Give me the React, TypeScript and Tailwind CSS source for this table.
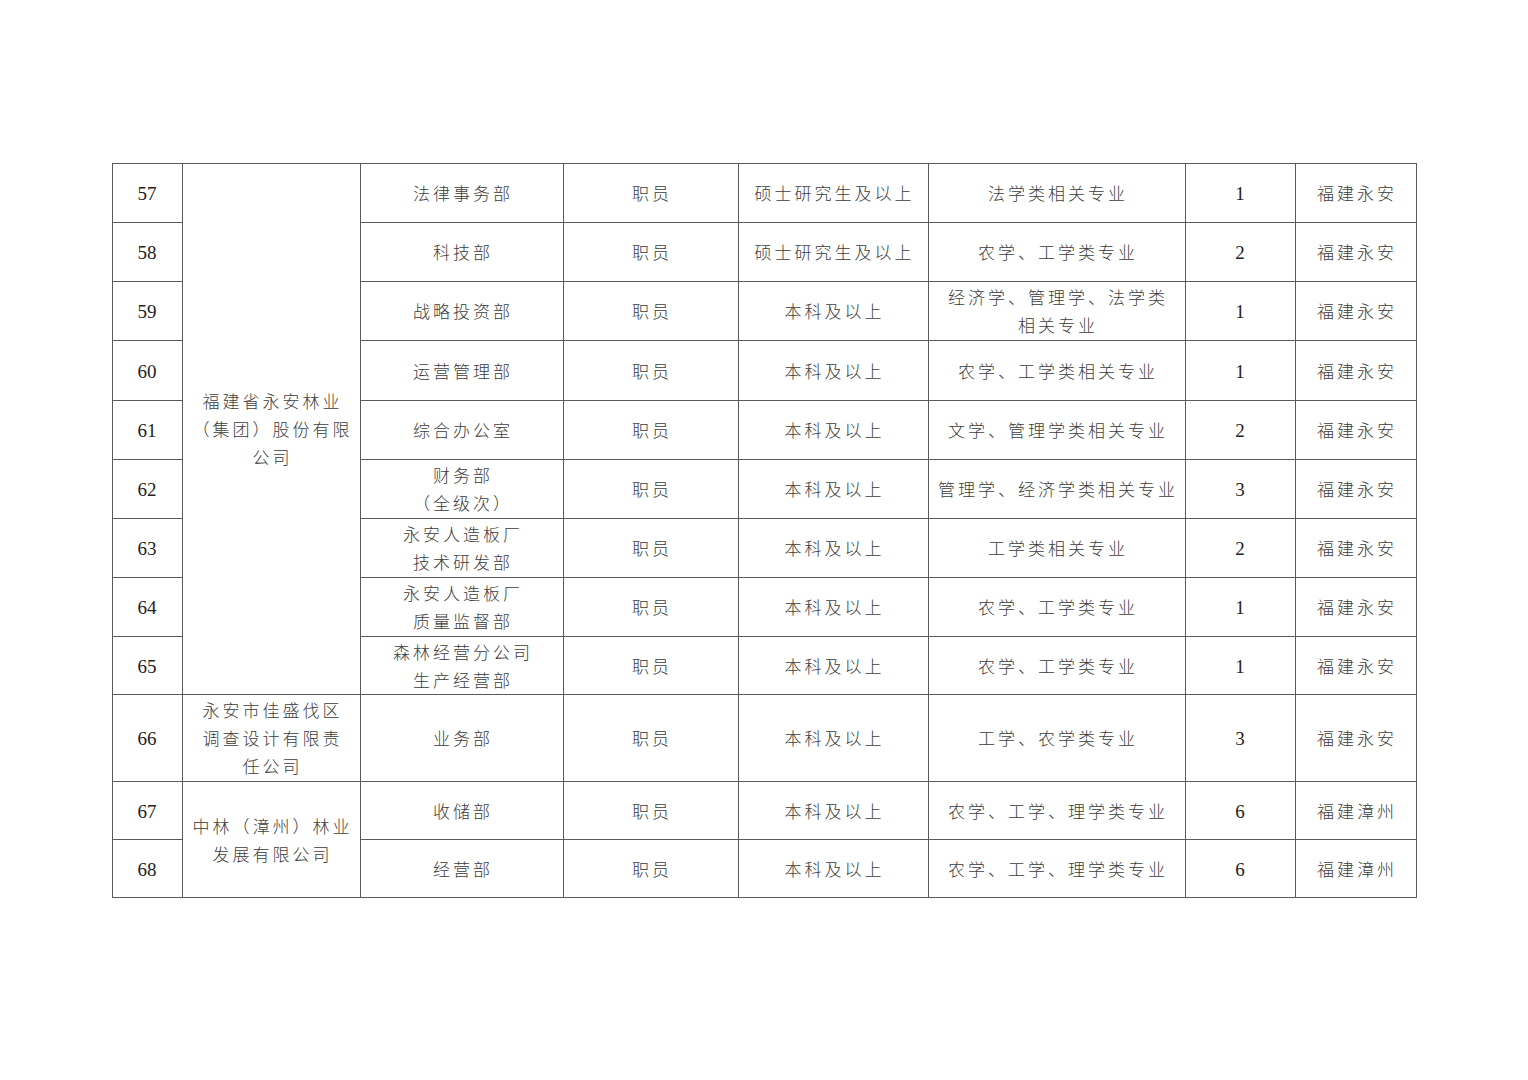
import React from "react";

type Row = {
  no: string;
  dept: string[];
  pos: string;
  edu: string;
  major: string[];
  num: string;
  place: string;
  h: string;
};

const cn = "[font-family:'Noto_Sans_CJK_SC',sans-serif] font-light text-[17px] tracking-[3px] leading-[28px] text-[#3c3c3c]";
const numCls = "inline-block pt-[3px] [font-family:'Liberation_Serif',serif] text-[19px] text-[#222]";
const td = "border border-[#5a5a5a] text-center align-middle p-0";

function Txt({ lines }: { lines: string[] }) {
  return (
    <div className={cn + " whitespace-nowrap mr-[-3px]"}>
      {lines.map((l, i) => (
        <div key={i}>{l}</div>
      ))}
    </div>
  );
}

const rows: Row[] = [
  { no: "57", dept: ["法律事务部"], pos: "职员", edu: "硕士研究生及以上", major: ["法学类相关专业"], num: "1", place: "福建永安", h: "h-[59px]" },
  { no: "58", dept: ["科技部"], pos: "职员", edu: "硕士研究生及以上", major: ["农学、工学类专业"], num: "2", place: "福建永安", h: "h-[59px]" },
  { no: "59", dept: ["战略投资部"], pos: "职员", edu: "本科及以上", major: ["经济学、管理学、法学类", "相关专业"], num: "1", place: "福建永安", h: "h-[59px]" },
  { no: "60", dept: ["运营管理部"], pos: "职员", edu: "本科及以上", major: ["农学、工学类相关专业"], num: "1", place: "福建永安", h: "h-[60px]" },
  { no: "61", dept: ["综合办公室"], pos: "职员", edu: "本科及以上", major: ["文学、管理学类相关专业"], num: "2", place: "福建永安", h: "h-[59px]" },
  { no: "62", dept: ["财务部", "（全级次）"], pos: "职员", edu: "本科及以上", major: ["管理学、经济学类相关专业"], num: "3", place: "福建永安", h: "h-[59px]" },
  { no: "63", dept: ["永安人造板厂", "技术研发部"], pos: "职员", edu: "本科及以上", major: ["工学类相关专业"], num: "2", place: "福建永安", h: "h-[59px]" },
  { no: "64", dept: ["永安人造板厂", "质量监督部"], pos: "职员", edu: "本科及以上", major: ["农学、工学类专业"], num: "1", place: "福建永安", h: "h-[59px]" },
  { no: "65", dept: ["森林经营分公司", "生产经营部"], pos: "职员", edu: "本科及以上", major: ["农学、工学类专业"], num: "1", place: "福建永安", h: "h-[58px]" },
  { no: "66", dept: ["业务部"], pos: "职员", edu: "本科及以上", major: ["工学、农学类专业"], num: "3", place: "福建永安", h: "h-[87px]" },
  { no: "67", dept: ["收储部"], pos: "职员", edu: "本科及以上", major: ["农学、工学、理学类专业"], num: "6", place: "福建漳州", h: "h-[58px]" },
  { no: "68", dept: ["经营部"], pos: "职员", edu: "本科及以上", major: ["农学、工学、理学类专业"], num: "6", place: "福建漳州", h: "h-[58px]" },
];

function companyCell(i: number) {
  if (i === 0)
    return (
      <td rowSpan={9} className={td}>
        <Txt lines={["福建省永安林业", "（集团）股份有限", "公司"]} />
      </td>
    );
  if (i === 9)
    return (
      <td className={td}>
        <Txt lines={["永安市佳盛伐区", "调查设计有限责", "任公司"]} />
      </td>
    );
  if (i === 10)
    return (
      <td rowSpan={2} className={td}>
        <Txt lines={["中林（漳州）林业", "发展有限公司"]} />
      </td>
    );
  return null;
}

export default function App() {
  return (
    <div className="w-[1528px] h-[1080px] bg-white overflow-hidden">
      <table className="mx-auto mt-[163px] w-[1304px] table-fixed border-collapse">
        <colgroup>
          <col className="w-[70px]" />
          <col className="w-[178px]" />
          <col className="w-[203px]" />
          <col className="w-[175px]" />
          <col className="w-[190px]" />
          <col className="w-[257px]" />
          <col className="w-[110px]" />
          <col className="w-[121px]" />
        </colgroup>
        <tbody>
          {rows.map((r, i) => (
            <tr key={r.no} className={r.h}>
              <td className={td}>
                <span className={numCls}>{r.no}</span>
              </td>
              {companyCell(i)}
              <td className={td}>
                <Txt lines={r.dept} />
              </td>
              <td className={td}>
                <Txt lines={[r.pos]} />
              </td>
              <td className={td}>
                <Txt lines={[r.edu]} />
              </td>
              <td className={td}>
                <Txt lines={r.major} />
              </td>
              <td className={td}>
                <span className={numCls}>{r.num}</span>
              </td>
              <td className={td}>
                <Txt lines={[r.place]} />
              </td>
            </tr>
          ))}
        </tbody>
      </table>
    </div>
  );
}
